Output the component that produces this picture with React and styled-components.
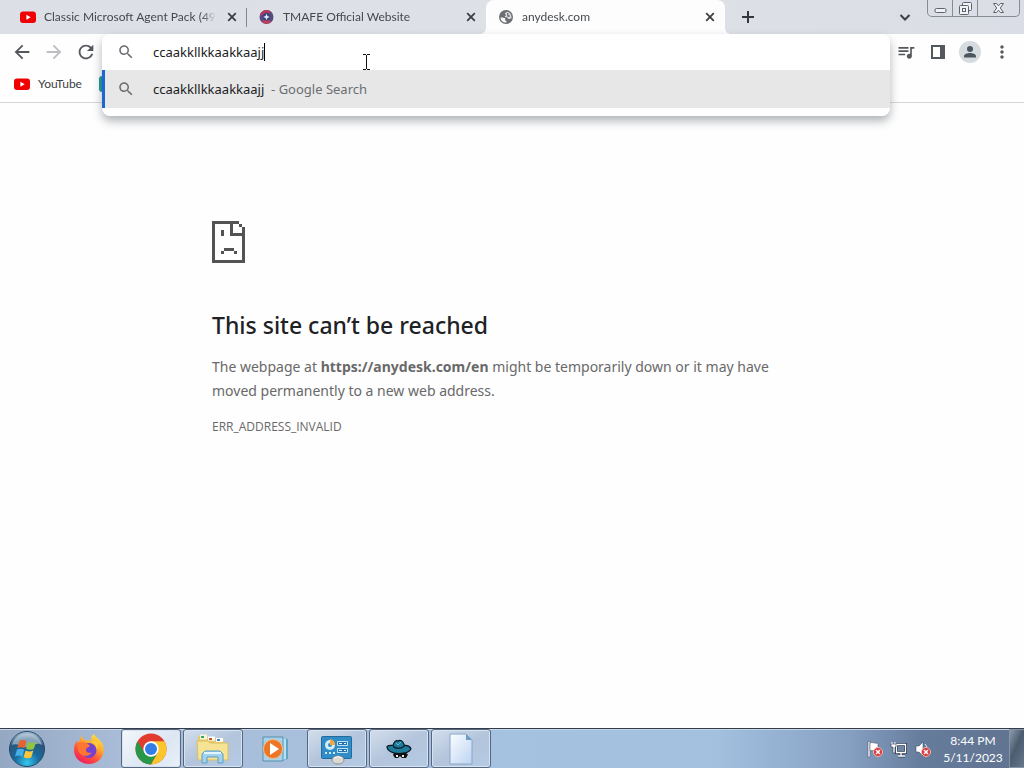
import React from "react";
import styled, { createGlobalStyle, css } from "styled-components";

const GlobalStyle = createGlobalStyle`
  * { box-sizing: border-box; }
  html, body, #root { margin: 0; height: 100%; }
  body { font-family: Lato, "Open Sans", sans-serif; font-size: 12px; color: #3c4043; }
  button, input { font: inherit; color: inherit; }
  svg { display: block; flex: none; }
`;

const Desktop = styled.div`
  display: flex;
  flex-direction: column;
  min-height: 100vh;
  background: #fefefe;
`;

/* ---------- tab strip ---------- */

const TabStrip = styled.header`
  display: flex;
  height: 34px;
  padding-left: 8px;
  background: linear-gradient(100deg, #dcdfe6, #dee1e6 60%, #dadde5);
`;

const Tab = styled.div`
  position: relative;
  display: flex;
  align-items: center;
  gap: 8px;
  flex: 0 1 239px;
  min-width: 0;
  padding: 0 7px 0 12px;
  border-radius: 8px 8px 0 0;
  ${(p) =>
    p.$divider &&
    css`
      &::after {
        content: "";
        position: absolute;
        right: 0;
        top: 8px;
        width: 1px;
        height: 19px;
        background: #85898f;
      }
    `}
  ${(p) =>
    p.$active &&
    css`
      background: #fdfdfe;
      &::before,
      &::after {
        content: "";
        position: absolute;
        bottom: 0;
        width: 6px;
        height: 6px;
      }
      &::before {
        right: 100%;
        background: radial-gradient(circle at 0 0, transparent 6px, #fdfdfe 6px);
      }
      &::after {
        left: 100%;
        background: radial-gradient(circle at 100% 0, transparent 6px, #fdfdfe 6px);
      }
    `}
`;

const TabTitle = styled.span`
  flex: 1;
  min-width: 0;
  overflow: hidden;
  white-space: nowrap;
  line-height: 18px;
  color: #45494e;
  mask-image: linear-gradient(to right, #000 92%, transparent);
`;

const IconButton = styled.button`
  display: grid;
  place-items: center;
  flex: none;
  width: ${(p) => p.$size || 28}px;
  height: ${(p) => p.$size || 28}px;
  padding: 0;
  border: 0;
  border-radius: 50%;
  background: none;
  color: ${(p) => (p.disabled ? "#bcbec1" : "#54575b")};
`;

const StripTools = styled.div`
  display: flex;
  align-items: center;
  justify-content: space-between;
  flex: 1;
  padding: 0 4px 0 9px;
`;

const WindowTools = styled.div`
  display: flex;
  align-items: center;
  align-self: stretch;
  gap: 8px;
`;

const WindowControls = styled.div`
  display: flex;
  align-self: flex-start;
  height: 17px;
  width: 93px;
  border: 1px solid #858b95;
  border-top: 0;
  border-radius: 0 0 5px 5px;
`;

const WindowButton = styled.button`
  display: grid;
  place-items: center;
  flex: ${(p) => (p.$wide ? "1" : "0 0 25px")};
  padding: 0;
  border: 0;
  border-right: ${(p) => (p.$wide ? "0" : "1px solid #858b95")};
  background: none;
  color: #5d636d;
`;

/* ---------- toolbar ---------- */

const Toolbar = styled.div`
  position: relative;
  z-index: 2;
  display: flex;
  align-items: center;
  height: 36px;
  padding: 0 8px;
  gap: 2px;
`;

const ButtonGroup = styled.div`
  display: flex;
  gap: 4px;
`;

const Omnibox = styled.form`
  position: relative;
  flex: 1;
  align-self: stretch;
`;

const OmniboxPopup = styled.div`
  position: absolute;
  inset: 0 0 auto 0;
  padding-bottom: 8px;
  background: #fff;
  border-radius: 8px;
  box-shadow: 0 5px 10px rgba(50, 60, 65, 0.38);
  color: #202124;
  font-family: "Noto Sans", "Open Sans", sans-serif;
  font-size: 13px;
`;

const InputRow = styled.label`
  display: flex;
  align-items: center;
  height: 36px;
  padding-left: 15px;
`;

const Suggestion = styled.div`
  display: flex;
  align-items: center;
  height: 38px;
  padding-left: 12px;
  border-left: 3px solid #1f66d0;
  background: #e7e7e7;
  white-space: pre;
`;

const SearchGlyph = styled.span`
  flex: 0 0 36px;
  color: #6a6d71;
`;

const Query = styled.input`
  field-sizing: content;
  padding: 0;
  border: 0;
  outline: 0;
  background: none;
  line-height: 20px;
`;

const Caret = styled.span`
  width: 1px;
  height: 18px;
  background: #000;
`;

const Muted = styled.span`
  color: #6b6e72;
`;

const Pointer = styled.svg`
  position: absolute;
  left: 261px;
  top: 20px;
`;

const Bookmarks = styled.nav`
  display: flex;
  align-items: center;
  gap: 17px;
  height: 33px;
  padding: 0 14px 4px;
  border-bottom: 1px solid #d4d6d9;
`;

const Bookmark = styled.a`
  display: flex;
  align-items: center;
  gap: 8px;
  color: inherit;
  text-decoration: none;
  line-height: 18px;
`;

const BookmarkTile = styled.span`
  width: 16px;
  height: 16px;
  border-radius: 3px;
  background: #1d9a9a;
`;

/* ---------- error page ---------- */

const Page = styled.main`
  flex: 1;
  padding: 118px 24px 24px;
`;

const ErrorBox = styled.section`
  max-width: 600px;
  margin: 0 auto;
  color: #696969;
  font-family: "Noto Sans", "Open Sans", sans-serif;
  font-size: 14px;
  line-height: 24px;
`;

const ErrorTitle = styled.h1`
  margin: 46px 0 14px;
  color: #202124;
  font-size: 23px;
  font-weight: 500;
  line-height: 32px;
`;

const ErrorText = styled.p`
  margin: 0;
`;

const ErrorCode = styled.p`
  margin: 12px 0 0;
  font-family: "Open Sans", "Noto Sans", sans-serif;
  font-size: 12px;
`;

/* ---------- taskbar ---------- */

const Taskbar = styled.footer`
  display: flex;
  height: 40px;
  border-top: 1px solid #343c49;
  box-shadow: inset 0 1px 0 #c9d8e9;
  background: linear-gradient(90deg, #94a8c4 0, #a9bdd8 12%, #a5c2e1 50%, #a3c0df 70%, #86a0c2 83%, #667c9c 90%, #60738f 100%);
`;

const TaskButton = styled.button`
  display: grid;
  place-items: center;
  flex: 0 1 60px;
  margin-right: 2px;
  padding: 0;
  border: 1px solid transparent;
  border-radius: 3px;
  background: none;
  ${(p) =>
    p.$open &&
    css`
      border-color: #56677f;
      background: linear-gradient(150deg, #d3deec, #b3c5dc 50%, #b4cae4);
      box-shadow: inset 0 0 0 1px #d6e3f1;
    `}
  ${(p) =>
    p.$focused &&
    css`
      background: linear-gradient(135deg, #f3f7fb, #dce6f2 60%, #e9f1f9);
    `}
`;

const StartButton = styled.button`
  display: grid;
  place-items: center;
  width: 54px;
  margin-right: 5px;
  padding: 0;
  border: 0;
  background: none;
`;

const Tray = styled.div`
  display: flex;
  align-items: center;
  margin-left: auto;
`;

const TrayIcons = styled.div`
  display: flex;
  gap: 6px;
`;

const Clock = styled.time`
  width: 66px;
  margin: 0 3px 0 8px;
  color: #fff;
  text-align: center;
  line-height: 17px;
`;

const ShowDesktop = styled.button`
  align-self: stretch;
  width: 15px;
  padding: 0;
  border: 1px solid #8494aa;
  border-right: 0;
  background: linear-gradient(115deg, #8c9aac, #4d5b6f 45%, #66768c);
`;

/* ---------- icons ---------- */

const Glyph = ({ d, size = 22 }) => (
  <svg width={size} height={size} viewBox="0 0 24 24" fill="currentColor" aria-hidden="true">
    <path d={d} />
  </svg>
);

const PATHS = {
  back: "M20 11H7.83l5.59-5.59L12 4l-8 8 8 8 1.41-1.41L7.83 13H20v-2z",
  forward: "M12 4l-1.41 1.41L16.17 11H4v2h12.17l-5.58 5.59L12 20l8-8z",
  reload:
    "M17.65 6.35C16.2 4.9 14.21 4 12 4c-4.42 0-7.99 3.58-7.99 8s3.57 8 7.99 8c3.73 0 6.84-2.55 7.73-6h-2.08c-.82 2.33-3.04 4-5.65 4-3.31 0-6-2.69-6-6s2.69-6 6-6c1.66 0 3.14.69 4.22 1.78L13 11h7V4l-2.35 2.35z",
  search:
    "M15.5 14h-.79l-.28-.27C15.41 12.59 16 11.11 16 9.5 16 5.91 13.09 3 9.5 3S3 5.91 3 9.5 5.91 16 9.5 16c1.61 0 3.09-.59 4.23-1.57l.27.28v.79l5 4.99L20.49 19l-4.99-5zm-6 0C7.01 14 5 11.99 5 9.5S7.01 5 9.5 5 14 7.01 14 9.5 11.99 14 9.5 14z",
  queue:
    "M15 6H3v2h12V6zm0 4H3v2h12v-2zM3 16h8v-2H3v2zM17 6v8.18c-.31-.11-.65-.18-1-.18-1.66 0-3 1.34-3 3s1.34 3 3 3 3-1.34 3-3V8h3V6h-5z",
  more: "M12 8c1.1 0 2-.9 2-2s-.9-2-2-2-2 .9-2 2 .9 2 2 2zm0 2c-1.1 0-2 .9-2 2s.9 2 2 2 2-.9 2-2-.9-2-2-2zm0 6c-1.1 0-2 .9-2 2s.9 2 2 2 2-.9 2-2-.9-2-2-2z",
};

const YouTubeIcon = () => (
  <svg width="16" height="16" viewBox="0 0 16 16" aria-hidden="true">
    <rect y="2.500" width="16" height="11.500" rx="3" fill="#f00000" />
    <path d="M6.400 5.700v5l4.300-2.500z" fill="#fff" />
  </svg>
);

const AgentSiteIcon = () => (
  <svg width="16" height="16" viewBox="0 0 16 16" aria-hidden="true">
    <circle cx="7.500" cy="8" r="7" fill="#5a4a80" />
    <path d="M1 6a7 7 0 0 1 11-3.500l-2 2a4 4 0 0 0-6.500 2z" fill="#b5385a" />
    <path d="M3 13a7 7 0 0 0 9 0l-2-2.500H5z" fill="#c23f59" />
    <circle cx="7.500" cy="8" r="3.800" fill="#39447e" />
    <path d="M7.500 4.700l.9 2.400 2.400.9-2.400.9-.9 2.400-.9-2.400-2.400-.9 2.400-.9z" fill="#e6ecfa" />
  </svg>
);

const GlobeIcon = () => (
  <svg width="16" height="16" viewBox="0 0 16 16" aria-hidden="true">
    <circle cx="8" cy="8" r="7" fill="#6c6f72" />
    <path d="M2.500 8.400c2 .1 4.200.1 4.700 1.200.4.800-.4 1.300.2 2 .5.500 1.400.5 1.200 1.900-3.300.3-6-2-6.100-5.100z" fill="#f4f5f6" />
    <path d="M9.800 2.700C8.600 3 7 3.600 7 4.700c0 .8 1 .7.900 1.500-.1.700-1.300.8-1.100 1.600.2.700 1.700.2 2.500.8.700.6.500 1.400 1.400 1.500 1 .1 1.600-.7 2.700-.8.500-2.700-.9-5.600-3.600-6.600z" fill="#dcdee0" />
    <path d="M8.800 3.800l2 .6-.6 1.600 1.900.4-.7 1.700-2-.4z" fill="#6c6f72" />
  </svg>
);

const CloseIcon = () => (
  <svg width="10" height="10" viewBox="0 0 10 10" stroke="#3c4043" strokeWidth="1.800" aria-hidden="true">
    <path d="M1.200 1.200l7.600 7.600M8.800 1.200L1.200 8.800" />
  </svg>
);

const PlusIcon = () => (
  <svg width="14" height="14" viewBox="0 0 14 14" stroke="#33373b" strokeWidth="2" aria-hidden="true">
    <path d="M7 1v12M1 7h12" />
  </svg>
);

const ChevronIcon = () => (
  <svg width="12" height="12" viewBox="0 0 12 12" fill="none" stroke="#3c4043" strokeWidth="2" aria-hidden="true">
    <path d="M1.500 4L6 8.500 10.500 4" />
  </svg>
);

const MinimizeIcon = () => (
  <svg width="13" height="16" viewBox="0 0 13 16" fill="#f1f2f5" stroke="currentColor" aria-hidden="true">
    <rect x="1" y="8.500" width="11" height="4" rx="1.500" />
  </svg>
);

const RestoreIcon = () => (
  <svg width="14" height="16" viewBox="0 0 14 16" fill="#f1f2f5" stroke="currentColor" aria-hidden="true">
    <rect x="4.500" y="2.500" width="9" height="8" rx="1" />
    <rect x="1.500" y="5.500" width="9" height="9" rx="1" />
    <rect x="4.500" y="8.500" width="3" height="3" />
  </svg>
);

const WindowCloseIcon = () => (
  <svg width="13" height="16" viewBox="0 0 13 16" fill="#f1f2f5" stroke="currentColor" aria-hidden="true">
    <path d="M1.500 3.500h3l2 2.300 2-2.300h3L8.300 8l3.200 4.500h-3l-2-2.300-2 2.300h-3L4.700 8z" />
  </svg>
);

const SidePanelIcon = () => (
  <svg width="14" height="14" viewBox="0 0 14 14" aria-hidden="true">
    <path d="M0 0h14v14H0zM2 2v10h7V2z" fill="currentColor" fillRule="evenodd" />
  </svg>
);

const AvatarIcon = () => (
  <svg width="22" height="22" viewBox="0 0 22 22" aria-hidden="true">
    <circle cx="11" cy="11" r="11" fill="#d6dbdf" />
    <circle cx="11" cy="8" r="3" fill="#4b555e" />
    <path d="M5 16.500v-1.300c0-2 3.500-3.200 6-3.200s6 1.200 6 3.200v1.300z" fill="#4b555e" />
  </svg>
);

const SadPageIcon = () => (
  <svg width="33" height="42" viewBox="0 0 33 42" shapeRendering="crispEdges" fill="#535353" role="img" aria-label="Page error">
    <path d="M0 0h27v3H3v36h27V6h3v36H0z" />
    <path d="M18 3h3v9h9v3H18zM27 3h3v3h-3zM9 9h3v6H9zM12 27h10v3H12zM9 30h3v3H9zM22 30h3v3h-3z" />
  </svg>
);

const StartIcon = () => (
  <svg width="38" height="38" viewBox="0 0 38 38" aria-hidden="true">
    <defs>
      <radialGradient id="orb" cx=".5" cy=".9" r=".9">
        <stop offset="0" stopColor="#35c8ee" />
        <stop offset=".4" stopColor="#176a9c" />
        <stop offset=".75" stopColor="#2b567c" />
        <stop offset="1" stopColor="#b9cddd" />
      </radialGradient>
    </defs>
    <circle cx="19" cy="19" r="17.500" fill="url(#orb)" stroke="#24496b" />
    <path d="M4 15a15.500 15.500 0 0 1 30 0c-6-4-11 3-16 2S8 13 4 15z" fill="#d3e2ed" opacity=".55" />
    <path d="M11.500 11c3-1.500 5-1 7 .3l-2 7c-2-1.300-4.500-1.600-7.200-.4z" fill="#e8622c" />
    <path d="M20 12c2.500 1.300 5 1.300 8 0l-2.200 7c-2.600 1.200-5.200 1-7.700-.2z" fill="#90c63e" />
    <path d="M9 19.500c2.600-1.200 5-1 7.200.3l-2 7c-2-1.400-4.500-1.600-7.200-.4z" fill="#48aee6" />
    <path d="M17.600 20.400c2.500 1.300 5 1.300 7.700.1l-2.100 7c-2.700 1.200-5.200 1-7.600-.3z" fill="#fcc63d" />
  </svg>
);

const FirefoxIcon = () => (
  <svg width="32" height="32" viewBox="0 0 32 32" aria-hidden="true">
    <defs>
      <linearGradient id="fox" x1=".85" y1="0" x2=".25" y2="1">
        <stop offset="0" stopColor="#ffe84a" />
        <stop offset=".35" stopColor="#ffb02e" />
        <stop offset=".65" stopColor="#ff5838" />
        <stop offset="1" stopColor="#ee1762" />
      </linearGradient>
    </defs>
    <path d="M21 1c1 3 6 5 8.500 10 4 9-2 20-13.500 20C7 31 1 24.500 1 17c0-4 1-7 3-10l.5 3L7 7.500C7 6 7.500 4 9 2.500c0 2 1 4 3.500 5 2-.5 4.500 0 6 1C17.500 5.500 18.500 2.500 21 1z" fill="url(#fox)" />
    <circle cx="16" cy="17.500" r="7.500" fill="#7442cf" />
    <path d="M5 12c2-3 5-3.500 8-2l4 2.500c-1 2-3.500 2-4 3.500-.7 3 2.500 4.500 5.500 3.500-2 4-8 4.500-11.500 1C5 18.500 4 15 5 12z" fill="#ff7633" />
    <path d="M17 10c4-1 7 3 6.500 7 2-3 1.500-7-1-9z" fill="#ffcc3d" />
  </svg>
);

const ChromeIcon = () => (
  <svg width="32" height="32" viewBox="0 0 32 32" aria-hidden="true">
    <circle cx="16" cy="16" r="15.500" fill="#e23b2f" />
    <path d="M2.580 8.250A15.500 15.500 0 0 0 16 31.500L22.500 19.800 16 16 9.500 19.800z" fill="#279847" />
    <path d="M16 31.500A15.500 15.500 0 0 0 29.420 8.250H16v7.750l6.700 3.800z" fill="#fbc62b" />
    <circle cx="16" cy="16" r="7.700" fill="#fff" />
    <circle cx="16" cy="16" r="6" fill="#337de6" />
  </svg>
);

const ExplorerIcon = () => (
  <svg width="34" height="32" viewBox="0 0 34 32" aria-hidden="true">
    <path d="M2 3h8l2 2h14l2 2v20H2z" fill="#e9cc71" />
    <path d="M4 1.500h7v5H4z" fill="#f8f4d8" />
    <path d="M5 3h3v2H5z" fill="#35a857" />
    <path d="M12 3.500h7v4h-7z" fill="#fff" />
    <path d="M13 5h3v2h-3z" fill="#c65632" />
    <path d="M20 5h7v4h-7z" fill="#fff" />
    <path d="M21 6h3v2h-3z" fill="#4b85bd" />
    <path d="M1 8h11l2 2h18v17H2z" fill="#f7e394" stroke="#d8bd65" />
    <path d="M6 30v-9l3-3h15l3 3v9h-5v-6H11v6z" fill="#9fd3ee" stroke="#5b9cc5" />
    <path d="M8 20h17" stroke="#e3f6ff" strokeWidth="2" />
  </svg>
);

const MediaIcon = () => (
  <svg width="28" height="28" viewBox="0 0 28 28" aria-hidden="true">
    <path d="M21 3l6 1v20l-6 2z" fill="#5fa5ca" />
    <path d="M22 3l3 1v20l-3 1z" fill="#bae0f1" />
    <path d="M2 2h20v24H2z" fill="#a6d2ea" stroke="#568fae" />
    <circle cx="12" cy="14" r="9.500" fill="#ec7625" stroke="#f8b983" />
    <path d="M9 8v12l9-6z" fill="#fff" />
  </svg>
);

const ControlPanelIcon = () => (
  <svg width="34" height="32" viewBox="0 0 34 32" aria-hidden="true">
    <rect x="1.500" y="3.500" width="30" height="22" rx="1" fill="#2f8cc6" stroke="#246a9a" />
    <circle cx="10" cy="12" r="5" fill="#d5edf8" />
    <circle cx="10" cy="12" r="2" fill="#2f8cc6" />
    <path d="M10 12V6a6 6 0 0 1 5 6z" fill="#f3a73a" />
    <path d="M17.500 8.500h10v4h-10zM17.500 15.500h10v4h-10z" fill="#2374b4" stroke="#bce2f4" />
    <path d="M19 10.500h3M24 10.500h2M19 17.500h3M24 17.500h2" stroke="#e6f6fd" />
    <path d="M5 20h2M9 20h2M13 20h2" stroke="#cbe9f7" strokeWidth="2" />
    <ellipse cx="18" cy="27" rx="6" ry="4" fill="#dad9d2" stroke="#94928a" />
    <path d="M14 25q4-3 8 0" fill="none" stroke="#fff" />
  </svg>
);

const SpyIcon = () => (
  <svg width="28" height="22" viewBox="0 0 28 22" aria-hidden="true">
    <path d="M2 8.500c2-1.500 4-1 6-1C9 3.500 11 2 13 3c2-1.500 5-.5 6.500 4.500 2.500-.2 5 .8 6.500 3-1 3.500-6 5-12 5S2 13 2 8.500z" fill="#1f7c9c" stroke="#07171f" strokeWidth="1.200" />
    <path d="M8 8.500c4 2.500 8 2.500 11.500-.5" fill="none" stroke="#0b2b38" strokeWidth="1.500" />
    <path d="M11 5l2 2 3-3" fill="none" stroke="#5cbcd0" />
    <path d="M9 15h12l2 1.500-2 3.500h-4l-2-2-2 2h-3l-2-3z" fill="#101010" />
    <path d="M11 17h2v2h-2zM17 17h2v2h-2z" fill="#e7ebf0" />
  </svg>
);

const DocumentIcon = () => (
  <svg width="26" height="32" viewBox="0 0 26 32" aria-hidden="true">
    <defs>
      <linearGradient id="sheet" x1="0" y1="0" x2="1" y2="1">
        <stop offset="0" stopColor="#fbfdff" />
        <stop offset="1" stopColor="#bcd4f2" />
      </linearGradient>
    </defs>
    <path d="M2 1h16l6 6v24H2z" fill="url(#sheet)" stroke="#8aa6c9" />
    <path d="M18 1l6 6h-6z" fill="#6e9dc8" />
  </svg>
);

const ErrorBadge = ({ x, y }) => (
  <g>
    <circle cx={x} cy={y} r="4.500" fill="#d8373b" stroke="#f1b6b6" />
    <path d={`M${x - 2} ${y - 2}l4 4m0-4l-4 4`} stroke="#fff" strokeWidth="1.500" />
  </g>
);

const FlagIcon = () => (
  <svg width="18" height="18" viewBox="0 0 18 18" aria-label="Action Center" role="img">
    <path d="M2 1.500h2V17H2z" fill="#fff" stroke="#33435b" strokeWidth=".5" />
    <path d="M4 3c3-1.500 4 1 8 0v8c-4 1-5-1.500-8 0z" fill="#fff" stroke="#33435b" strokeWidth=".5" />
    <ErrorBadge x={12} y={12} />
  </svg>
);

const NetworkIcon = () => (
  <svg width="18" height="18" viewBox="0 0 18 18" aria-label="Network" role="img" fill="none">
    <path d="M6.500 4.500h9v8h-9zM8 16h7M11 12.500V16" stroke="#2c3b52" strokeWidth="3" />
    <path d="M6.500 4.500h9v8h-9zM8 16h7M11 12.500V16" stroke="#fff" strokeWidth="1.300" />
    <path d="M1 4h5v3H5v6H3V7H1z" fill="#fff" stroke="#2c3b52" strokeWidth=".6" />
    <path d="M2 2v2M5 2v2" stroke="#fff" />
  </svg>
);

const VolumeIcon = () => (
  <svg width="18" height="18" viewBox="0 0 18 18" aria-label="Volume muted" role="img">
    <path d="M2 6h3l4-4v14l-4-4H2z" fill="#fff" stroke="#33435b" strokeWidth=".5" />
    <path d="M11 4q2 2 2 5" fill="none" stroke="#dce5ef" />
    <ErrorBadge x={12} y={12} />
  </svg>
);

/* ---------- page ---------- */

const TABS = [
  { title: "Classic Microsoft Agent Pack (49", Icon: YouTubeIcon, divider: true },
  { title: "TMAFE Official Website", Icon: AgentSiteIcon },
  { title: "anydesk.com", Icon: GlobeIcon, active: true },
];

const TASKS = [
  { label: "Firefox", Icon: FirefoxIcon },
  { label: "Google Chrome", Icon: ChromeIcon, open: true, focused: true },
  { label: "Windows Explorer", Icon: ExplorerIcon, open: true },
  { label: "Media Player", Icon: MediaIcon },
  { label: "Control Panel", Icon: ControlPanelIcon, open: true },
  { label: "Agent", Icon: SpyIcon, open: true },
  { label: "Document", Icon: DocumentIcon, open: true },
];

const QUERY = "ccaakkllkkaakkaajj";

export default function App() {
  return (
    <Desktop>
      <GlobalStyle />
      <TabStrip>
        {TABS.map(({ title, Icon, divider, active }) => (
          <Tab key={title} $divider={divider} $active={active}>
            <Icon />
            <TabTitle>{title}</TabTitle>
            <IconButton $size={16} aria-label={`Close ${title}`}>
              <CloseIcon />
            </IconButton>
          </Tab>
        ))}
        <StripTools>
          <IconButton aria-label="New tab">
            <PlusIcon />
          </IconButton>
          <WindowTools>
            <IconButton aria-label="Search tabs">
              <ChevronIcon />
            </IconButton>
            <WindowControls>
              <WindowButton aria-label="Minimize">
                <MinimizeIcon />
              </WindowButton>
              <WindowButton aria-label="Restore">
                <RestoreIcon />
              </WindowButton>
              <WindowButton $wide aria-label="Close window">
                <WindowCloseIcon />
              </WindowButton>
            </WindowControls>
          </WindowTools>
        </StripTools>
      </TabStrip>

      <Toolbar>
        <ButtonGroup>
          <IconButton aria-label="Back">
            <Glyph d={PATHS.back} />
          </IconButton>
          <IconButton aria-label="Forward" disabled>
            <Glyph d={PATHS.forward} />
          </IconButton>
          <IconButton aria-label="Reload">
            <Glyph d={PATHS.reload} />
          </IconButton>
        </ButtonGroup>
        <Omnibox onSubmit={(e) => e.preventDefault()}>
          <OmniboxPopup>
            <InputRow>
              <SearchGlyph>
                <Glyph d={PATHS.search} size={18} />
              </SearchGlyph>
              <Query defaultValue={QUERY} aria-label="Address and search bar" spellCheck={false} />
              <Caret />
            </InputRow>
            <Suggestion>
              <SearchGlyph>
                <Glyph d={PATHS.search} size={18} />
              </SearchGlyph>
              <span>{QUERY}</span>
              <Muted>{"  - Google Search"}</Muted>
            </Suggestion>
            <Pointer width="8" height="16" viewBox="0 0 8 16" shapeRendering="crispEdges" fill="#111" aria-hidden="true">
              <path d="M0 0h3v1H0zM4 0h3v1H4zM3 1h1v14H3zM0 15h3v1H0zM4 15h3v1H4z" />
            </Pointer>
          </OmniboxPopup>
        </Omnibox>
        <ButtonGroup>
          <IconButton aria-label="Media controls">
            <Glyph d={PATHS.queue} size={20} />
          </IconButton>
          <IconButton aria-label="Side panel">
            <SidePanelIcon />
          </IconButton>
          <IconButton aria-label="Profile">
            <AvatarIcon />
          </IconButton>
          <IconButton aria-label="Menu">
            <Glyph d={PATHS.more} size={20} />
          </IconButton>
        </ButtonGroup>
      </Toolbar>

      <Bookmarks aria-label="Bookmarks">
        <Bookmark href="#youtube">
          <YouTubeIcon />
          YouTube
        </Bookmark>
        <BookmarkTile />
      </Bookmarks>

      <Page>
        <ErrorBox>
          <SadPageIcon />
          <ErrorTitle>This site can’t be reached</ErrorTitle>
          <ErrorText>
            The webpage at <strong>https://anydesk.com/en</strong> might be temporarily down or it may have moved
            permanently to a new web address.
          </ErrorText>
          <ErrorCode>ERR_ADDRESS_INVALID</ErrorCode>
        </ErrorBox>
      </Page>

      <Taskbar>
        <StartButton aria-label="Start">
          <StartIcon />
        </StartButton>
        {TASKS.map(({ label, Icon, open, focused }) => (
          <TaskButton key={label} aria-label={label} $open={open} $focused={focused}>
            <Icon />
          </TaskButton>
        ))}
        <Tray>
          <TrayIcons>
            <FlagIcon />
            <NetworkIcon />
            <VolumeIcon />
          </TrayIcons>
          <Clock>
            8:44 PM
            <br />
            5/11/2023
          </Clock>
          <ShowDesktop aria-label="Show desktop" />
        </Tray>
      </Taskbar>
    </Desktop>
  );
}
